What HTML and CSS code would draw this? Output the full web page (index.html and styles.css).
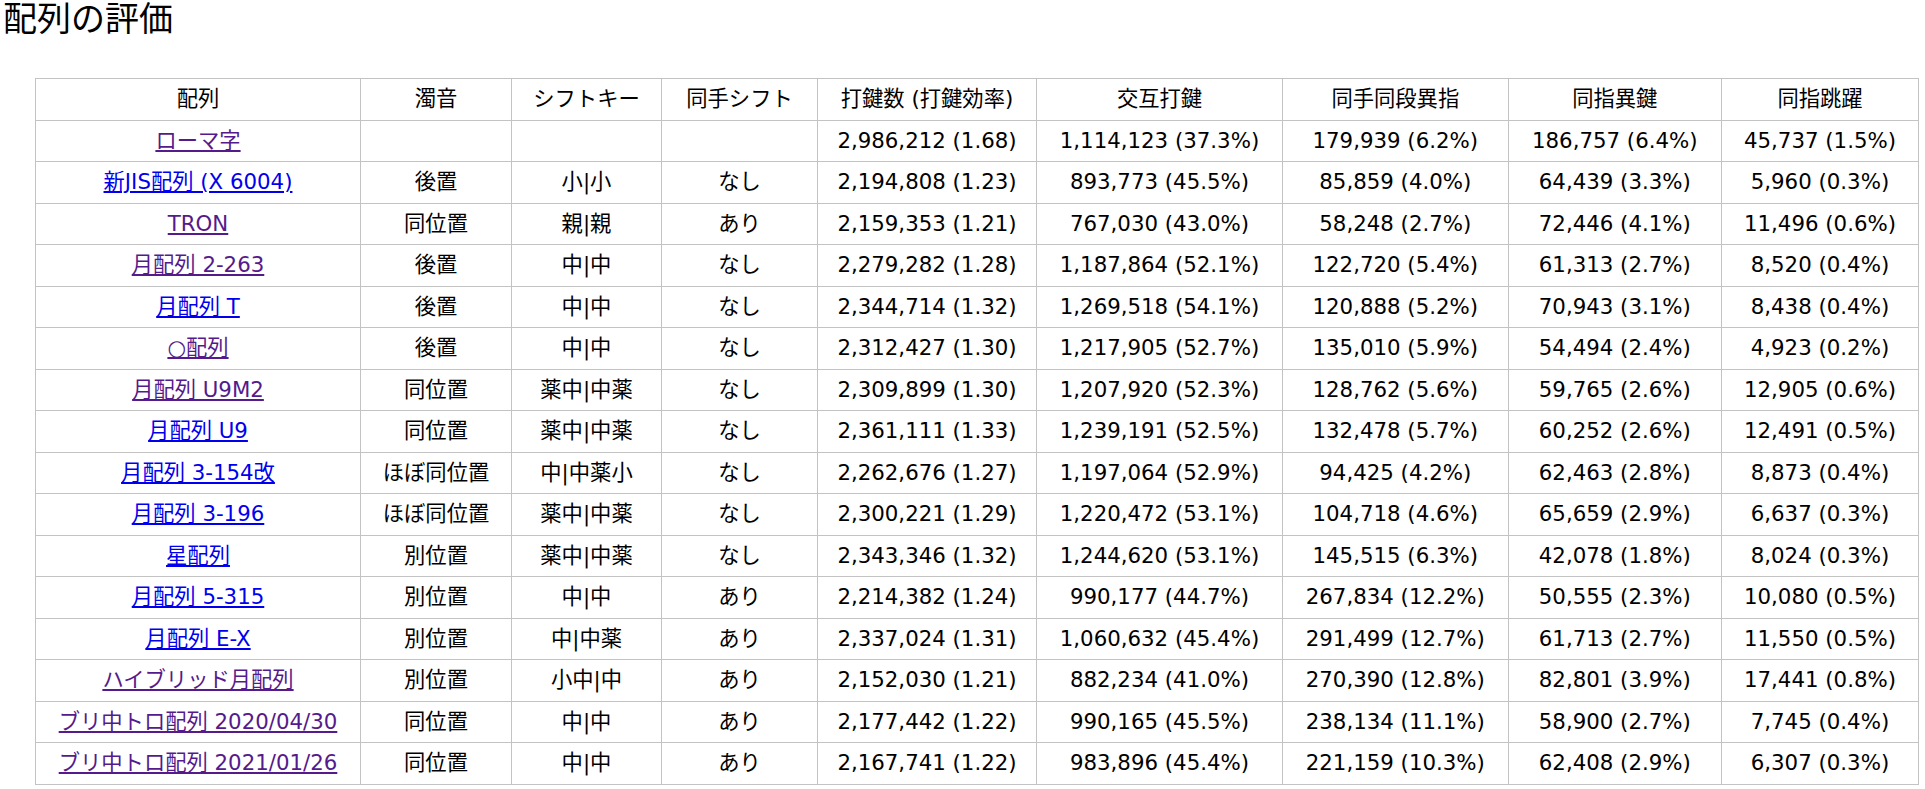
FILE: index.html
```html
<!DOCTYPE html>
<html lang="ja">
<head>
<meta charset="utf-8">
<title>配列の評価</title>
<link rel="stylesheet" href="styles.css">
</head>
<body>
<h1 class="title">配列の評価</h1>
<table class="eval">
<colgroup>
<col class="c1"><col class="c2"><col class="c3"><col class="c4"><col class="c5"><col class="c6"><col class="c7"><col class="c8"><col class="c9">
</colgroup>
<thead>
<tr><th>配列</th><th>濁音</th><th>シフトキー</th><th>同手シフト</th><th>打鍵数 (打鍵効率)</th><th>交互打鍵</th><th>同手同段異指</th><th>同指異鍵</th><th>同指跳躍</th></tr>
</thead>
<tbody>
<tr><td><a class="visited" href="#r1">ローマ字</a></td><td></td><td></td><td></td><td>2,986,212 (1.68)</td><td>1,114,123 (37.3%)</td><td>179,939 (6.2%)</td><td>186,757 (6.4%)</td><td>45,737 (1.5%)</td></tr>
<tr><td><a href="#r2">新JIS配列 (X 6004)</a></td><td>後置</td><td>小|小</td><td>なし</td><td>2,194,808 (1.23)</td><td>893,773 (45.5%)</td><td>85,859 (4.0%)</td><td>64,439 (3.3%)</td><td>5,960 (0.3%)</td></tr>
<tr><td><a class="visited" href="#r3">TRON</a></td><td>同位置</td><td>親|親</td><td>あり</td><td>2,159,353 (1.21)</td><td>767,030 (43.0%)</td><td>58,248 (2.7%)</td><td>72,446 (4.1%)</td><td>11,496 (0.6%)</td></tr>
<tr><td><a class="visited" href="#r4">月配列 2-263</a></td><td>後置</td><td>中|中</td><td>なし</td><td>2,279,282 (1.28)</td><td>1,187,864 (52.1%)</td><td>122,720 (5.4%)</td><td>61,313 (2.7%)</td><td>8,520 (0.4%)</td></tr>
<tr><td><a href="#r5">月配列 T</a></td><td>後置</td><td>中|中</td><td>なし</td><td>2,344,714 (1.32)</td><td>1,269,518 (54.1%)</td><td>120,888 (5.2%)</td><td>70,943 (3.1%)</td><td>8,438 (0.4%)</td></tr>
<tr><td><a class="visited" href="#r6">○配列</a></td><td>後置</td><td>中|中</td><td>なし</td><td>2,312,427 (1.30)</td><td>1,217,905 (52.7%)</td><td>135,010 (5.9%)</td><td>54,494 (2.4%)</td><td>4,923 (0.2%)</td></tr>
<tr><td><a class="visited" href="#r7">月配列 U9M2</a></td><td>同位置</td><td>薬中|中薬</td><td>なし</td><td>2,309,899 (1.30)</td><td>1,207,920 (52.3%)</td><td>128,762 (5.6%)</td><td>59,765 (2.6%)</td><td>12,905 (0.6%)</td></tr>
<tr><td><a href="#r8">月配列 U9</a></td><td>同位置</td><td>薬中|中薬</td><td>なし</td><td>2,361,111 (1.33)</td><td>1,239,191 (52.5%)</td><td>132,478 (5.7%)</td><td>60,252 (2.6%)</td><td>12,491 (0.5%)</td></tr>
<tr><td><a href="#r9">月配列 3-154改</a></td><td>ほぼ同位置</td><td>中|中薬小</td><td>なし</td><td>2,262,676 (1.27)</td><td>1,197,064 (52.9%)</td><td>94,425 (4.2%)</td><td>62,463 (2.8%)</td><td>8,873 (0.4%)</td></tr>
<tr><td><a href="#r10">月配列 3-196</a></td><td>ほぼ同位置</td><td>薬中|中薬</td><td>なし</td><td>2,300,221 (1.29)</td><td>1,220,472 (53.1%)</td><td>104,718 (4.6%)</td><td>65,659 (2.9%)</td><td>6,637 (0.3%)</td></tr>
<tr><td><a href="#r11">星配列</a></td><td>別位置</td><td>薬中|中薬</td><td>なし</td><td>2,343,346 (1.32)</td><td>1,244,620 (53.1%)</td><td>145,515 (6.3%)</td><td>42,078 (1.8%)</td><td>8,024 (0.3%)</td></tr>
<tr><td><a href="#r12">月配列 5-315</a></td><td>別位置</td><td>中|中</td><td>あり</td><td>2,214,382 (1.24)</td><td>990,177 (44.7%)</td><td>267,834 (12.2%)</td><td>50,555 (2.3%)</td><td>10,080 (0.5%)</td></tr>
<tr><td><a href="#r13">月配列 E-X</a></td><td>別位置</td><td>中|中薬</td><td>あり</td><td>2,337,024 (1.31)</td><td>1,060,632 (45.4%)</td><td>291,499 (12.7%)</td><td>61,713 (2.7%)</td><td>11,550 (0.5%)</td></tr>
<tr><td><a class="visited" href="#r14">ハイブリッド月配列</a></td><td>別位置</td><td>小中|中</td><td>あり</td><td>2,152,030 (1.21)</td><td>882,234 (41.0%)</td><td>270,390 (12.8%)</td><td>82,801 (3.9%)</td><td>17,441 (0.8%)</td></tr>
<tr><td><a class="visited" href="#r15">ブリ中トロ配列 2020/04/30</a></td><td>同位置</td><td>中|中</td><td>あり</td><td>2,177,442 (1.22)</td><td>990,165 (45.5%)</td><td>238,134 (11.1%)</td><td>58,900 (2.7%)</td><td>7,745 (0.4%)</td></tr>
<tr><td><a class="visited" href="#r16">ブリ中トロ配列 2021/01/26</a></td><td>同位置</td><td>中|中</td><td>あり</td><td>2,167,741 (1.22)</td><td>983,896 (45.4%)</td><td>221,159 (10.3%)</td><td>62,408 (2.9%)</td><td>6,307 (0.3%)</td></tr>
</tbody>
</table>
</body>
</html>
```
FILE: styles.css
```css
html, body {
  margin: 0;
  padding: 0;
  background: #fff;
  color: #000;
}

body {
  font-family: "DejaVu Sans", "Noto Sans CJK JP", sans-serif;
}

.title {
  margin: 0 0 0 3px;
  font-family: "Noto Sans CJK JP", sans-serif;
  font-size: 34px;
  font-weight: normal;
  line-height: 34px;
}

.eval {
  margin: 44px 0 0 35px;
  border-collapse: collapse;
  table-layout: fixed;
  width: 1884px;
  font-size: 21.3px;
  line-height: 24.5px;
}

.eval th,
.eval td {
  border: 1px solid #c3c3c3;
  padding: 8px 4px;
  text-align: center;
  font-weight: normal;
  white-space: nowrap;
  overflow: hidden;
}

.c1 { width: 325px; }
.c2 { width: 151px; }
.c3 { width: 150px; }
.c4 { width: 156px; }
.c5 { width: 219px; }
.c6 { width: 246px; }
.c7 { width: 225.6px; }
.c8 { width: 213.4px; }
.c9 { width: 197px; }

.eval a {
  color: #0000ee;
  text-decoration: underline;
}

.eval a.visited {
  color: #551a8b;
}
```
